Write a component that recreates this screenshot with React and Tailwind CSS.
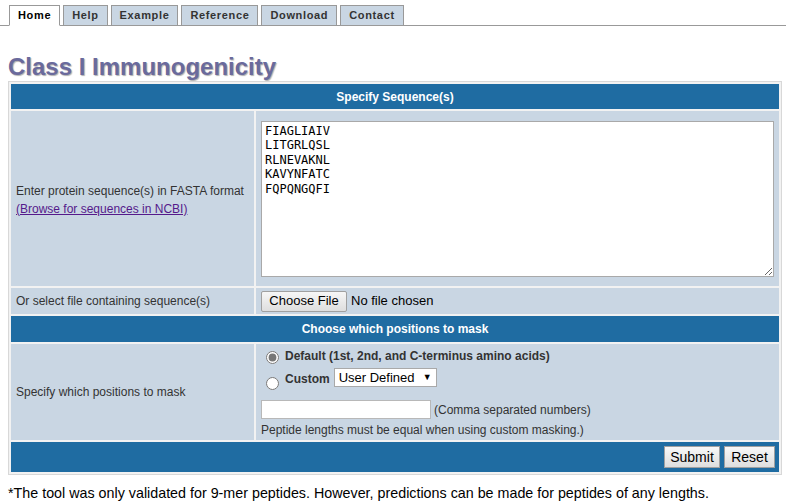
import React from "react";

const tabs = ["Home", "Help", "Example", "Reference", "Download", "Contact"];

export default function App() {
  return (
    <div className="bg-white min-h-[502px] text-[12px] text-[#333]" style={{ fontFamily: '"Liberation Sans", Arial, sans-serif' }}>
      <div className="pt-[5px] border-b border-[#999] flex gap-[3px] pl-[9px] h-[26px]">
        {tabs.map((t, i) => (
          <div
            key={t}
            className={
              "h-[21px] px-[8px] border border-[#999] flex items-center text-[11px] font-bold tracking-[0.65px] " +
              (i === 0 ? "bg-white border-b-white text-black" : "bg-[#c9d6e3] text-[#333]")
            }
          >
            {t}
          </div>
        ))}
      </div>
      <h1
        className="ml-[8px] mt-[27px] text-[24px] font-bold leading-[28px] text-[#6a6a9c]"
        style={{ textShadow: "1px 1px 1px #b0b0b0" }}
      >
        Class I Immunogenicity
      </h1>
      <div className="mx-[8px] mt-[0px] w-[774px]">
        <table className="w-full border-separate border-spacing-[2px] border border-[#d8d8d8] bg-[#f2f2f2]">
          <tbody>
            <tr>
              <td colSpan={2} className="bg-[#1f6ca2] h-[25px] text-center text-white font-bold text-[12px]">
                Specify Sequence(s)
              </td>
            </tr>
            <tr>
              <td className="bg-[#c9d6e3] w-[244px] h-[175px] px-[5px] align-middle">
                <div className="pt-[2px]">Enter protein sequence(s) in FASTA format</div>
                <div>
                  <a className="text-[#551a8b] underline" href="#">(Browse for sequences in NCBI)</a>
                </div>
              </td>
              <td className="bg-[#c9d6e3] px-[5px]">
                <textarea
                  className="block w-[513px] h-[156px] border border-[#a9a9a9] bg-white px-[3px] py-[2px] text-[12px] leading-[14.5px] text-black resize-y"
                  style={{ fontFamily: '"DejaVu Sans Mono", monospace' }}
                  defaultValue={"FIAGLIAIV\nLITGRLQSL\nRLNEVAKNL\nKAVYNFATC\nFQPQNGQFI"}
                />
              </td>
            </tr>
            <tr>
              <td className="bg-[#c9d6e3] h-[26px] px-[5px]">Or select file containing sequence(s)</td>
              <td className="bg-[#c9d6e3] px-[5px]">
                <div className="flex items-center">
                  <span className="h-[21px] w-[86px] border border-[#a0a0a0] rounded-[2px] bg-gradient-to-b from-[#f6f6f6] to-[#dedede] text-[13px] text-black flex items-center justify-center">
                    Choose File
                  </span>
                  <span className="ml-[4px] text-[13px] text-black">No file chosen</span>
                </div>
              </td>
            </tr>
            <tr>
              <td colSpan={2} className="bg-[#1f6ca2] h-[26px] text-center text-white font-bold text-[12px]">
                Choose which positions to mask
              </td>
            </tr>
            <tr>
              <td className="bg-[#c9d6e3] h-[96px] px-[5px] align-middle">Specify which positions to mask</td>
              <td className="bg-[#c9d6e3] px-[5px] pt-[1px] align-top">
                <div className="flex items-start h-[22px]">
                  <input type="radio" name="m" defaultChecked className="mt-[6px] ml-[5px] mr-[6px] w-[13px] h-[13px] accent-[#777]" />
                  <span className="font-bold mt-[2px]">Default (1st, 2nd, and C-terminus amino acids)</span>
                </div>
                <div className="flex items-start h-[26px] mt-[1px]">
                  <input type="radio" name="m" className="mt-[9px] ml-[5px] mr-[6px] w-[13px] h-[13px]" />
                  <span className="font-bold mt-[2px]">Custom</span>
                  <span className="ml-[4px] w-[103px] h-[19px] border border-[#a9a9a9] bg-white text-[13px] text-black flex items-center px-[4px] justify-between">
                    <span>User Defined</span>
                    <span className="text-[9px]">▼</span>
                  </span>
                </div>
                <div className="flex items-center mt-[6px] h-[19px]">
                  <span className="w-[170px] h-[19px] border border-[#b8b8b8] bg-white block" />
                  <span className="ml-[3px]">(Comma separated numbers)</span>
                </div>
                <div className="mt-[4px] leading-[14px]">Peptide lengths must be equal when using custom masking.)</div>
              </td>
            </tr>
            <tr>
              <td colSpan={2} className="bg-[#1f6ca2] h-[30px] pr-[4px]">
                <div className="flex justify-end gap-[4px]">
                  <span className="h-[22px] w-[56px] border border-[#a0a0a0] bg-gradient-to-b from-[#f8f8f8] to-[#dedede] text-[14px] text-black flex items-center justify-center">
                    Submit
                  </span>
                  <span className="h-[22px] w-[51px] border border-[#a0a0a0] bg-gradient-to-b from-[#f8f8f8] to-[#dedede] text-[14px] text-black flex items-center justify-center">
                    Reset
                  </span>
                </div>
              </td>
            </tr>
          </tbody>
        </table>
      </div>
      <p className="ml-[8px] mt-[8px] text-[14.3px] text-black">
        *The tool was only validated for 9-mer peptides. However, predictions can be made for peptides of any lengths.
      </p>
    </div>
  );
}
